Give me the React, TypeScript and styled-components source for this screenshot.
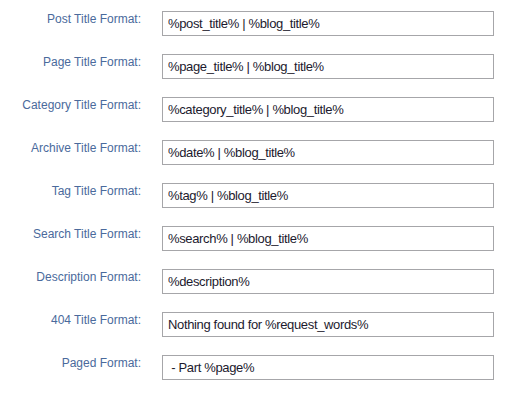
import React from 'react'
import styled, { createGlobalStyle } from 'styled-components'

const GlobalStyle = createGlobalStyle`
  html, body {
    margin: 0;
    padding: 0;
    background: #ffffff;
  }
`

const Form = styled.div`
  display: grid;
  grid-template-columns: 141px 332px;
  column-gap: 21px;
  row-gap: 18px;
  padding-top: 11px;
  font-family: 'Liberation Sans', Arial, sans-serif;
`

const Label = styled.label`
  text-align: right;
  font-size: 12px;
  line-height: 16px;
  color: #4a6a9c;
  white-space: nowrap;
`

const Input = styled.input`
  box-sizing: border-box;
  width: 332px;
  height: 25px;
  margin: 0;
  padding: 0 5px;
  border: 1px solid #a6a6a9;
  border-radius: 0;
  background: #fff;
  font-family: 'Liberation Sans', Arial, sans-serif;
  font-size: 13px;
  letter-spacing: -0.35px;
  color: #1c1a2e;
  outline: none;
`

const fields = [
  { label: 'Post Title Format:', value: '%post_title% | %blog_title%' },
  { label: 'Page Title Format:', value: '%page_title% | %blog_title%' },
  { label: 'Category Title Format:', value: '%category_title% | %blog_title%' },
  { label: 'Archive Title Format:', value: '%date% | %blog_title%' },
  { label: 'Tag Title Format:', value: '%tag% | %blog_title%' },
  { label: 'Search Title Format:', value: '%search% | %blog_title%' },
  { label: 'Description Format:', value: '%description%' },
  { label: '404 Title Format:', value: 'Nothing found for %request_words%' },
  { label: 'Paged Format:', value: ' - Part %page%' },
]

export default function App() {
  return (
    <>
      <GlobalStyle />
      <Form>
        {fields.map((f) => (
          <React.Fragment key={f.label}>
            <Label>{f.label}</Label>
            <Input type="text" defaultValue={f.value} />
          </React.Fragment>
        ))}
      </Form>
    </>
  )
}
